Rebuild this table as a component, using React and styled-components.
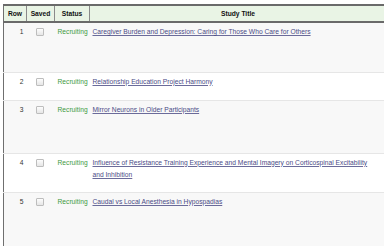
import React from "react";
import styled, { createGlobalStyle } from "styled-components";

const Global = createGlobalStyle`
  html, body { margin: 0; padding: 0; background: #fff; }
  body { font-family: "Liberation Sans", Arial, sans-serif; }
`;

const Page = styled.div`
  padding: 4px 0 0 3px;
  width: 384px;
  height: 246px;
  overflow: hidden;
  box-sizing: border-box;
`;

const Table = styled.table`
  border-collapse: collapse;
  width: 383px;
  border-left: 1px solid #6f6f6f;
  font-size: 6.7px;
  table-layout: fixed;
`;

const Col = styled.col`
  width: ${(p) => p.$w};
`;

const HeadCell = styled.th`
  background: #e9f4e5;
  border-top: 2px solid #6a6a6a;
  border-bottom: 2px solid #6a6a6a;
  border-left: 1px solid #8a8a8a;
  height: 15px;
  padding: 0;
  font-weight: bold;
  color: #111;
  text-align: center;
  &:first-child { border-left: none; }
`;

const Row = styled.tr`
  background: ${(p) => (p.$odd ? "#f8f8f8" : "#fff")};
  height: ${(p) => p.$h}px;
  border-bottom: 1px solid #e6e6e6;
`;

const Cell = styled.td`
  vertical-align: top;
  padding: ${(p) => p.$pad || "3px 2px 0 2px"};
  text-align: ${(p) => p.$align || "left"};
  color: #333;
  line-height: 12px;
`;

const Box = styled.span`
  display: inline-block;
  width: 6px;
  height: 6px;
  margin-top: 2px;
  border: 1px solid #bdbdbd;
  border-radius: 1px;
  background: linear-gradient(#fdfdfd, #e6e6e6);
`;

const Status = styled.span`
  color: #3f9a3f;
`;

const Link = styled.a`
  color: #4b4b86;
  text-decoration: underline;
  text-decoration-color: #6b6b9a;
`;

const rows = [
  { n: 1, h: 50, t: "Caregiver Burden and Depression: Caring for Those Who Care for Others" },
  { n: 2, h: 28, t: "Relationship Education Project Harmony" },
  { n: 3, h: 53, t: "Mirror Neurons in Older Participants" },
  { n: 4, h: 39, t: "Influence of Resistance Training Experience and Mental Imagery on Corticospinal Excitability and Inhibition" },
  { n: 5, h: 60, t: "Caudal vs Local Anesthesia in Hypospadias" },
];

export default function App() {
  return (
    <Page>
      <Global />
      <Table>
        <colgroup>
          <Col $w="23px" />
          <Col $w="28px" />
          <Col $w="35px" />
          <Col $w="auto" />
        </colgroup>
        <thead>
          <tr>
            <HeadCell>Row</HeadCell>
            <HeadCell>Saved</HeadCell>
            <HeadCell>Status</HeadCell>
            <HeadCell>Study Title</HeadCell>
          </tr>
        </thead>
        <tbody>
          {rows.map((r, i) => (
            <Row key={r.n} $odd={i % 2 === 0} $h={r.h}>
              <Cell $align="right" $pad="3px 3px 0 2px">{r.n}</Cell>
              <Cell $align="center" $pad="3px 1px 0 0"><Box /></Cell>
              <Cell $pad="3px 0 0 3px"><Status>Recruiting</Status></Cell>
              <Cell $pad="3px 12px 0 3px"><Link href="#">{r.t}</Link></Cell>
            </Row>
          ))}
        </tbody>
      </Table>
    </Page>
  );
}
